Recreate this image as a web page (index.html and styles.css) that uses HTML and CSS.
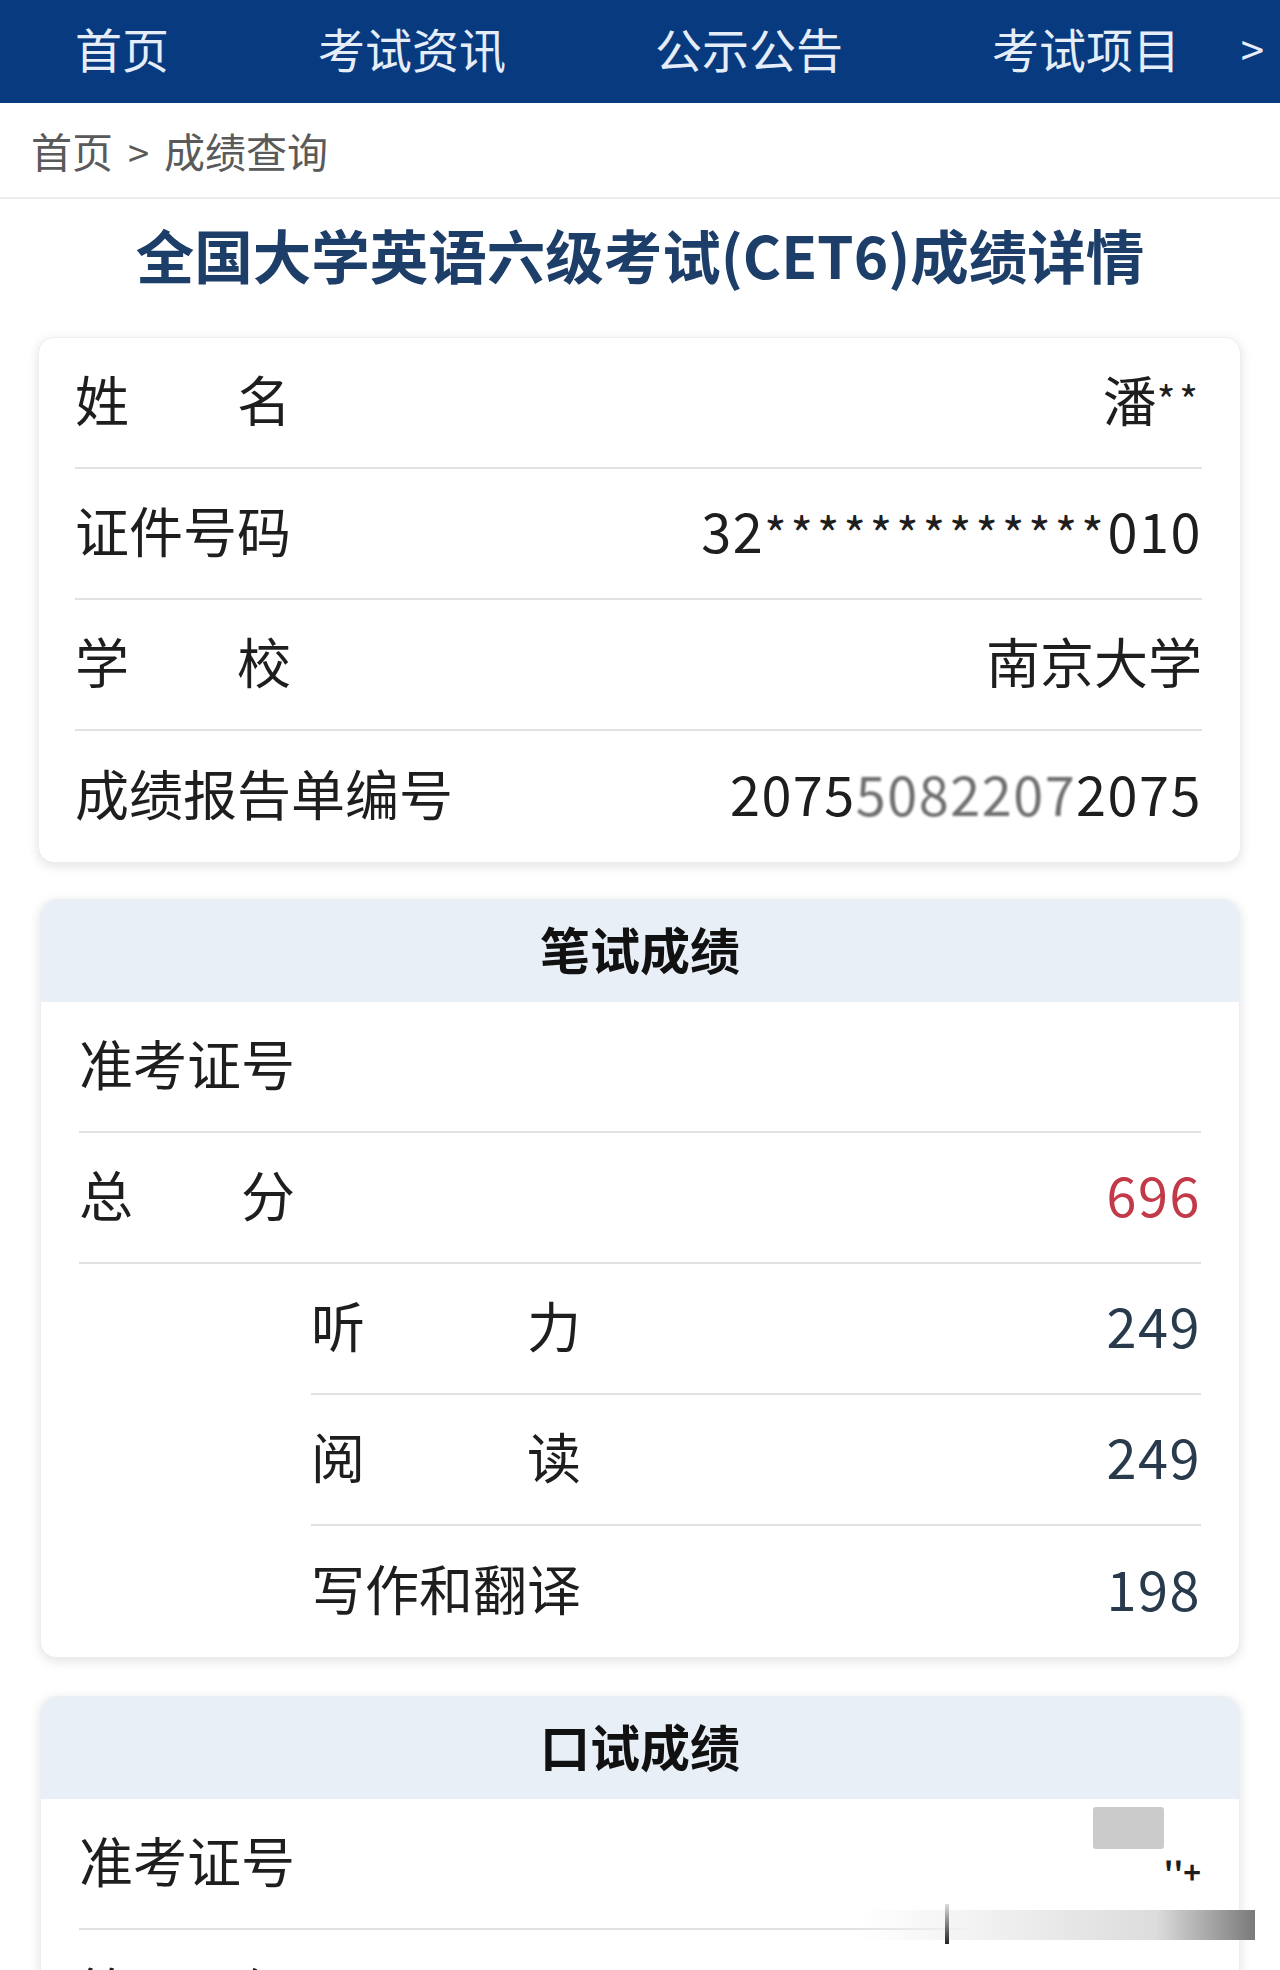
FILE: index.html
```html
<!DOCTYPE html>
<html>
<head>
  <meta charset="utf-8">
  <link rel="stylesheet" href="styles.css">
</head>
<body>
  <div class="nav">
    <a class="nav-item">首页</a>
    <a class="nav-item">考试资讯</a>
    <a class="nav-item">公示公告</a>
    <a class="nav-item">考试项目</a>
    <span class="nav-more">&gt;</span>
  </div>

  <div class="crumb">首页<span class="crumb-sep">&gt;</span>成绩查询</div>

  <h1 class="title">全国大学英语六级考试(CET6)成绩详情</h1>

  <div class="card info-card">
    <div class="row">
      <span class="label">姓 名</span>
      <span class="value">潘<sup class="mask">**</sup></span>
    </div>
    <div class="row">
      <span class="label">证件号码</span>
      <span class="value num">32<span class="stars">*************</span>010</span>
    </div>
    <div class="row">
      <span class="label">学 校</span>
      <span class="value">南京大学</span>
    </div>
    <div class="row">
      <span class="label wide">成绩报告单编号</span>
      <span class="value num">2075<span class="blurred">5082207</span>2075</span>
    </div>
  </div>

  <div class="card score-card">
    <div class="card-head">笔试成绩</div>
    <div class="row">
      <span class="label">准考证号</span>
      <span class="value"></span>
    </div>
    <div class="row">
      <span class="label">总 分</span>
      <span class="value num total">696</span>
    </div>
    <div class="row sub">
      <span class="label">听 力</span>
      <span class="value num part">249</span>
    </div>
    <div class="row sub">
      <span class="label">阅 读</span>
      <span class="value num part">249</span>
    </div>
    <div class="row sub">
      <span class="label">写作和翻译</span>
      <span class="value num part">198</span>
    </div>
  </div>

  <div class="card score-card oral-card">
    <div class="card-head">口试成绩</div>
    <div class="row">
      <span class="label">准考证号</span>
      <span class="value tail">''+</span>
    </div>
    <div class="row">
      <span class="label">等 级</span>
      <span class="value grade">--</span>
    </div>
    <!-- redaction marks over the photo -->
    <div class="cover-box"></div>
    <div class="cover-bar"></div>
    <div class="cover-tick"></div>
  </div>
</body>
</html>
```

FILE: styles.css
```css
body {
  margin: 0;
  background: #fff;
  font-family: "Noto Sans CJK SC", "Noto Sans", sans-serif;
  color: #1e1e1e;
}

.nav {
  position: relative;
  display: flex;
  gap: 149px;
  height: 103px;
  padding-left: 75px;
  background: #083a80;
  white-space: nowrap;
}
.nav-item {
  flex: none;
  font-size: 47px;
  line-height: 96px;
  color: #e4edf8;
}
.nav-more {
  position: absolute;
  top: 0;
  right: 16px;
  line-height: 96px;
  font-size: 42px;
  color: #e4edf8;
}

.crumb {
  height: 94px;
  line-height: 94px;
  padding-left: 31px;
  font-size: 41px;
  color: #5a5a5a;
  border-bottom: 2px solid #ececec;
}
.crumb-sep {
  margin: 0 15px;
  font-size: 38px;
}

.title {
  margin: 0;
  padding-top: 16px;
  line-height: 78px;
  font-size: 58.5px;
  font-weight: 700;
  text-align: center;
  color: #1c3e68;
}

.card {
  position: relative;
  margin: 44px 40px 0;
  background: #fff;
  border-radius: 16px;
  border: 1px solid #eceef1;
  box-shadow: 0 3px 12px rgba(0, 0, 0, 0.12);
  padding: 0 38px 0 38px;
}
.info-card {
  margin-left: 38px;
  margin-right: 39px;
  padding-left: 36px;
}
.score-card {
  margin-top: 36px;
  padding-top: 102px;
}
.oral-card {
  margin-top: 38px;
}

.card-head {
  position: absolute;
  top: 0;
  left: 0;
  right: 0;
  height: 102px;
  line-height: 97px;
  text-align: center;
  font-size: 50px;
  font-weight: 700;
  color: #111;
  background: #e8eff7;
  border-radius: 16px 16px 0 0;
}

.row {
  display: flex;
  align-items: center;
  justify-content: space-between;
  height: 131px;
  padding-bottom: 9px;
  box-sizing: border-box;
  border-bottom: 2px solid #e2e2e2;
}
.row:last-of-type {
  border-bottom: none;
}
.row.sub {
  margin-left: 232px;
}

.label {
  width: 4em;
  font-size: 54px;
  text-align: justify;
  text-align-last: justify;
  white-space: nowrap;
}
.label.wide {
  width: auto;
  text-align-last: auto;
}
.sub .label {
  width: 5em;
}

.value {
  font-size: 54px;
  white-space: nowrap;
}
.num {
  letter-spacing: 1.5px;
}
.mask {
  font-size: 40px;
  vertical-align: 6px;
  line-height: 0;
  letter-spacing: 4px;
}
.stars {
  font-size: 48px;
  letter-spacing: 4px;
}
.blurred {
  color: #555;
  filter: blur(1px);
  opacity: 0.85;
}
.total {
  color: #c23a48;
}
.part {
  color: #283a4c;
}
.tail {
  font-size: 30px;
  font-weight: 700;
  padding-top: 24px;
}
.grade {
  color: #d98a3a;
}

.cover-box {
  position: absolute;
  left: 1052px;
  top: 110px;
  width: 71px;
  height: 42px;
  background: #cbcbcb;
  border-radius: 3px;
}
.cover-bar {
  position: absolute;
  left: 817px;
  top: 213px;
  width: 397px;
  height: 30px;
  background: linear-gradient(to right, rgba(255, 255, 255, 0), #f2f2f2 30%, #dcdcdc 75%, #7a7a7a);
}
.cover-tick {
  position: absolute;
  left: 904px;
  top: 207px;
  width: 4px;
  height: 40px;
  background: linear-gradient(to bottom, #ddd, #222);
}
```
